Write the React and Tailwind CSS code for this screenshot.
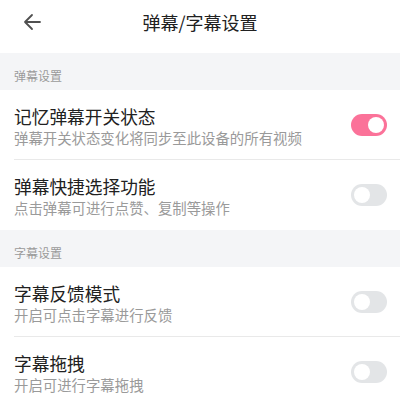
import { useState } from "react";

const sections = [
  {
    title: "弹幕设置",
    items: [
      { name: "记忆弹幕开关状态", desc: "弹幕开关状态变化将同步至此设备的所有视频", on: true },
      { name: "弹幕快捷选择功能", desc: "点击弹幕可进行点赞、复制等操作", on: false },
    ],
  },
  {
    title: "字幕设置",
    items: [
      { name: "字幕反馈模式", desc: "开启可点击字幕进行反馈", on: false },
      { name: "字幕拖拽", desc: "开启可进行字幕拖拽", on: false },
    ],
  },
];

function Toggle({ on, onClick }) {
  return (
    <button
      onClick={onClick}
      className={`w-[36px] h-[22px] rounded-full flex items-center px-[3px] shrink-0 ${
        on ? "bg-[#fb7299] justify-end" : "bg-[#e3e5e7] justify-start"
      }`}>
      <span className="w-[16px] h-[16px] rounded-full bg-white block"></span>
    </button>
  );
}

export default function App() {
  const [state, setState] = useState(
    sections.map((s) => s.items.map((i) => i.on))
  );

  const flip = (si, ii) => {
    setState((prev) =>
      prev.map((row, a) => row.map((v, b) => (a === si && b === ii ? !v : v)))
    );
  };

  return (
    <div
      className="w-[400px] h-[404px] overflow-hidden bg-white"
      style={{ fontFamily: '"Noto Sans CJK SC", "Noto Sans", sans-serif' }}>
      {/* Header */}
      <div className="relative h-[53px] flex items-center justify-center">
        <button className="absolute left-[23px] top-[13px] w-[18px] h-[18px]">
          <svg viewBox="0 0 18 18" className="w-[18px] h-[18px]" fill="none">
            <path
              d="M17 9H2M9 2L2 9l7 7"
              stroke="#505050"
              strokeWidth="1.8"
              strokeLinecap="round"
              strokeLinejoin="round"
            />
          </svg>
        </button>
        <h1 className="text-[18px] leading-none text-[#212121] -mt-[10px]">
          弹幕/字幕设置
        </h1>
      </div>

      {sections.map((section, si) => (
        <div key={section.title}>
          <div className="h-[37px] bg-[#f4f5f7] flex items-center px-[14px] pt-[9px]">
            <span className="text-[12px] text-[#9a9a9a]">{section.title}</span>
          </div>
          {section.items.map((item, ii) => (
            <div key={item.name} className="pl-[14px]">
              <div
                className={`h-[70px] flex items-center pr-[13px] ${
                  ii < section.items.length - 1 ? "border-b border-[#e9e9e9]" : ""
                }`}>
                <div className="flex-1 pt-[3px]">
                  <div className="text-[17.7px] leading-[22px] text-[#212121]">
                    {item.name}
                  </div>
                  <div className="text-[14.4px] leading-[21px] text-[#9a9a9a]">
                    {item.desc}
                  </div>
                </div>
                <Toggle on={state[si][ii]} onClick={() => flip(si, ii)} />
              </div>
            </div>
          ))}
        </div>
      ))}
    </div>
  );
}
